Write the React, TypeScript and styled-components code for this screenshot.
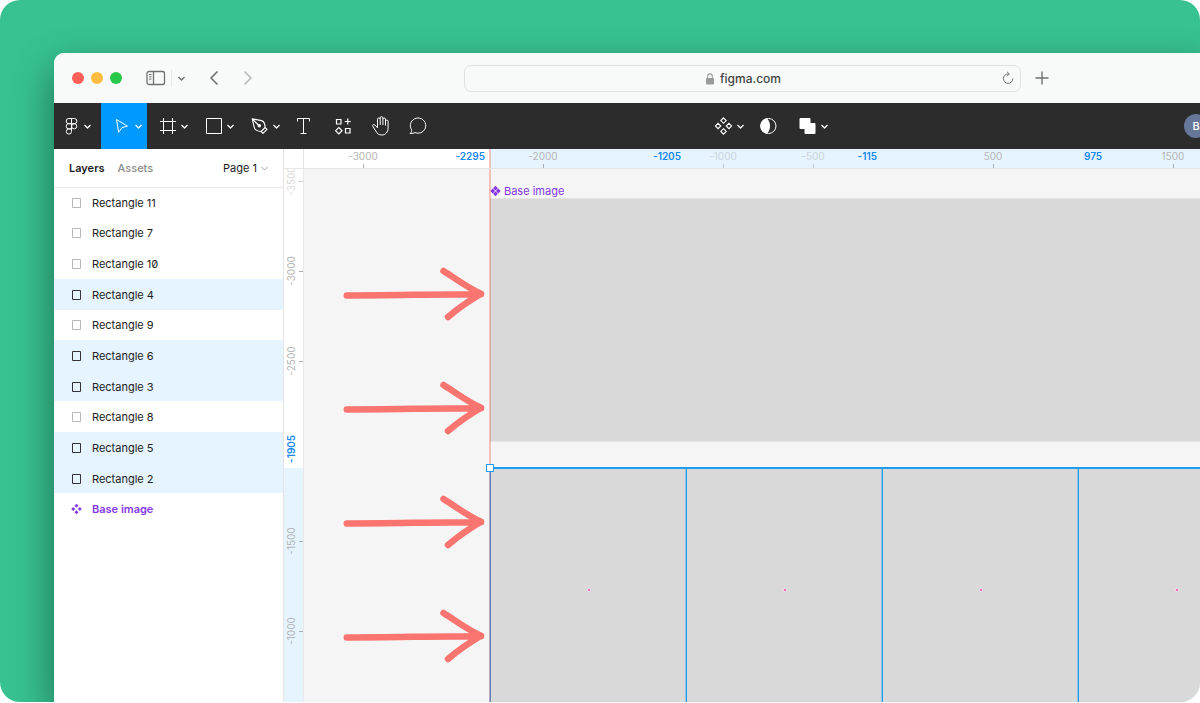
import React from "react";
import styled, { createGlobalStyle, css } from "styled-components";

const GlobalStyle = createGlobalStyle`
  *, *::before, *::after { box-sizing: border-box; }
  body { margin: 0; background: #fff; }
  body, button, input { font-family: Inter, "Liberation Sans", sans-serif; }
  button { margin: 0; padding: 0; border: 0; background: none; color: inherit; }
  svg { display: block; flex: none; }
`;

/* ---------- frame ---------- */

const Stage = styled.main`
  display: flex;
  min-height: calc(100vh - 1px);
  padding: 53px 0 0 54px;
  overflow: hidden;
  border-radius: 20px;
  background: #38c291;
`;

const BrowserWindow = styled.section`
  flex: 1;
  min-width: 0;
  display: flex;
  flex-direction: column;
  margin-right: -8px;
  border-radius: 10px 10px 0 0;
  background: #fff;
  box-shadow: 0 16px 42px rgba(0, 0, 0, 0.45);
`;

const TitleBar = styled.header`
  display: flex;
  align-items: center;
  height: 50px;
  padding: 0 155px 0 18px;
  border-radius: 10px 10px 0 0;
  background: #f8faf9;
  color: #6f7170;
`;

const Lights = styled.div`
  display: flex;
  gap: 7px;
`;

const Light = styled.span<{ $color: string }>`
  width: 12px;
  height: 12px;
  border-radius: 50%;
  background: ${(p) => p.$color};
`;

const NavGroup = styled.div`
  display: flex;
  align-items: center;
  margin-left: 24px;
`;

const NavButton = styled.button<{ $width: number; $dim?: boolean }>`
  display: flex;
  align-items: center;
  justify-content: center;
  width: ${(p) => p.$width}px;
  height: 24px;
  color: ${(p) => (p.$dim ? "#b9bbba" : "#6f7170")};
`;

const NavDivider = styled.span`
  width: 1px;
  height: 17px;
  margin-left: 5px;
  background: #e6e8e7;
`;

const AddressBar = styled.form`
  flex: 1;
  display: flex;
  align-items: center;
  height: 27px;
  margin: 0 10px 0 205px;
  padding: 0 6px;
  border: 1px solid #e0e2e1;
  border-radius: 7px;
`;

const AddressField = styled.label`
  flex: 1;
  display: flex;
  align-items: center;
  justify-content: center;
  gap: 6px;
  padding: 1px 0 0 17px;
`;

const AddressInput = styled.input`
  width: 64px;
  padding: 0;
  border: 0;
  outline: 0;
  background: none;
  color: #434544;
  font-size: 12px;
  font-weight: 500;
  line-height: 16px;
`;

/* ---------- toolbar ---------- */

const Toolbar = styled.nav`
  display: flex;
  align-items: center;
  height: 46px;
  background: #2c2c2c;
  color: #fff;
`;

const Tool = styled.button<{ $active?: boolean; $menu?: boolean }>`
  display: flex;
  align-items: center;
  justify-content: center;
  width: ${(p) => (p.$menu ? 46 : 38)}px;
  height: 46px;
  background: ${(p) => (p.$active ? "#0099ff" : "transparent")};
  ${(p) =>
    p.$menu &&
    css`
      padding-left: 4px;
    `}
`;

const MainMenu = styled(Tool)`
  width: 47px;
  padding: 0 4px 0 0;
`;

const Spacer = styled.div<{ $grow: number }>`
  flex: ${(p) => p.$grow} 1 0;
`;

const Avatar = styled.button`
  width: 24px;
  height: 24px;
  border-radius: 50%;
  background: #667799;
  font-size: 11px;
  font-weight: 500;
`;

/* ---------- layers panel ---------- */

const Body = styled.div`
  flex: 1;
  display: flex;
  min-height: 0;
`;

const Panel = styled.aside`
  flex: none;
  width: 230px;
  border-right: 1px solid #e5e5e5;
  background: #fff;
`;

const PanelHeader = styled.div`
  display: flex;
  align-items: center;
  gap: 13px;
  height: 38px;
  padding: 0 14px 0 15px;
`;

const Tab = styled.button<{ $active?: boolean }>`
  color: ${(p) => (p.$active ? "#1b1b1b" : "#8c8c8c")};
  font-size: 11px;
  font-weight: ${(p) => (p.$active ? 600 : 500)};
  line-height: 16px;
`;

const PageButton = styled.button`
  display: flex;
  align-items: center;
  gap: 3px;
  margin-left: auto;
  color: #a3a3a3;
  font-size: 11px;
  line-height: 16px;
  span { color: #1b1b1b; }
`;

const LayerList = styled.ul`
  display: grid;
  grid-template-rows: repeat(11, 1fr);
  height: 337px;
  margin: 0;
  padding: 0;
  list-style: none;
  box-shadow: inset 0 1px 0 #e8e8e8;
`;

const Layer = styled.li<{ $selected?: boolean; $component?: boolean }>`
  display: flex;
  align-items: center;
  gap: 10px;
  padding: 1px 0 0 16px;
  background: ${(p) => (p.$selected ? "#e5f4ff" : "transparent")};
  color: ${(p) => (p.$component ? "#8638e5" : "#222")};
  font-size: 11px;
  font-weight: ${(p) => (p.$component ? 600 : 400)};
  font-feature-settings: "zero";
  line-height: 16px;
  svg { color: ${(p) => (p.$component ? "#8638e5" : p.$selected ? "#333" : "#b8b8b8")}; }
`;

/* ---------- rulers and canvas ---------- */

const Workspace = styled.div`
  flex: 1;
  min-width: 0;
  display: grid;
  grid-template: 20px 1fr / 20px 1fr;
`;

const Corner = styled.div`
  border-right: 1px solid #e5e5e5;
  border-bottom: 1px solid #e5e5e5;
`;

const rulerText = css`
  color: #b5b5b5;
  font-size: 10px;
  line-height: 12px;
`;

const TopRuler = styled.div`
  position: relative;
  overflow: hidden;
  border-bottom: 1px solid #e5e5e5;
  ${rulerText}
`;

const SideRuler = styled.div`
  position: relative;
  overflow: hidden;
  border-right: 1px solid #e8e8e8;
  ${rulerText}
`;

const TopRange = styled.div`
  position: absolute;
  inset: 0 0 0 186px;
  background: #e5f4ff;
`;

const SideRange = styled.div`
  position: absolute;
  inset: 299px 0 0 0;
  background: #e5f4ff;
`;

type MarkKind = "plain" | "faded" | "before" | "after";

const markColor = css<{ $kind: MarkKind }>`
  opacity: ${(p) => (p.$kind === "faded" ? 0.5 : 1)};
  ${(p) =>
    (p.$kind === "before" || p.$kind === "after") &&
    css`
      color: #1489f0;
      font-weight: 600;
    `}
`;

const TopMark = styled.span<{ $kind: MarkKind }>`
  position: absolute;
  top: 1px;
  transform: translateX(
    ${(p) => (p.$kind === "before" ? "calc(-100% - 5px)" : p.$kind === "after" ? "6px" : "-50%")}
  );
  ${markColor}
`;

const SideMark = styled.span<{ $kind: MarkKind }>`
  position: absolute;
  left: 1px;
  writing-mode: vertical-rl;
  transform: translateY(${(p) => (p.$kind === "before" ? "calc(-100% - 5px)" : "-50%")}) rotate(180deg);
  ${markColor}
`;

const TopTick = styled.i<{ $kind: MarkKind }>`
  position: absolute;
  bottom: 0;
  width: 1px;
  height: 4px;
  background: #a8aeb3;
  opacity: ${(p) => (p.$kind === "faded" ? 0.6 : 1)};
`;

const SideTick = styled.i<{ $kind: MarkKind }>`
  position: absolute;
  right: 0;
  width: 4px;
  height: 1px;
  background: #a8aeb3;
  opacity: ${(p) => (p.$kind === "faded" ? 0.6 : 1)};
`;

const Canvas = styled.div`
  position: relative;
  overflow: hidden;
  background: #f5f5f5;
`;

const FrameLabel = styled.div`
  position: absolute;
  top: 14px;
  left: 186px;
  display: flex;
  align-items: center;
  gap: 3px;
  color: #8638e5;
  font-size: 11px;
  line-height: 16px;
`;

const BaseImage = styled.div`
  position: absolute;
  top: 29px;
  left: 186px;
  right: 0;
  height: 244px;
  border: solid #e4e4e4;
  border-width: 1px 0;
  background: #d9d9d9;
`;

const Slice = styled.div`
  position: absolute;
  top: 298px;
  bottom: 0;
  width: 196px;
  display: flex;
  justify-content: center;
  padding-top: 119px;
  border: solid #1c9cf2;
  border-width: 2px 0 0 1px;
  background: #d9d9d9;
  box-shadow: -1px 0 0 rgba(28, 156, 242, 0.4);
`;

const CenterDot = styled.span`
  width: 4px;
  height: 4px;
  border: 1px solid #f6e6ef;
  border-radius: 50%;
  background: #f0409c;
`;

const SnapLine = styled.div`
  position: absolute;
  top: 0;
  bottom: 0;
  left: 185px;
  width: 2px;
  background: rgba(242, 72, 50, 0.3);
`;

const Handle = styled.span`
  position: absolute;
  top: 295px;
  left: 182px;
  width: 8px;
  height: 8px;
  border: 1px solid #1c9cf2;
  background: #fff;
`;

const Arrow = styled.svg`
  position: absolute;
  left: 36px;
`;

/* ---------- icons ---------- */

type StrokeProps = { w: number; h: number; sw?: number; children: React.ReactNode };

const Ico = ({ w, h, sw = 1, children }: StrokeProps) => (
  <svg
    width={w}
    height={h}
    viewBox={`0 0 ${w} ${h}`}
    fill="none"
    stroke="currentColor"
    strokeWidth={sw}
    strokeLinejoin="round"
    aria-hidden="true"
  >
    {children}
  </svg>
);

const Chevron = ({ sw = 1 }: { sw?: number }) => (
  <Ico w={9} h={24} sw={sw}>
    <path d="M1.500 11 4.500 14 7.500 11" />
  </Ico>
);

const FigmaIcon = () => (
  <Ico w={24} h={24}>
    <path d="M12.500 4.500H9.800a2.600 2.600 0 0 0 0 5.200h2.700zM12.500 4.500h2.800a2.600 2.600 0 0 1 0 5.200h-2.800zM12.500 9.700H9.800a2.600 2.600 0 0 0 0 5.200h2.700zM12.500 14.900H9.800a2.600 2.600 0 1 0 2.700 2.600z" />
    <circle cx="15.200" cy="12.300" r="2.600" />
  </Ico>
);

const MoveIcon = () => (
  <Ico w={24} h={24}>
    <path d="M6.500 5.500 17.500 12.200 12 13.600 8.600 18.300z" strokeLinejoin="miter" />
  </Ico>
);

const FrameIcon = () => (
  <Ico w={24} h={24}>
    <path d="M7.500 4v16M16.500 4v16M4 7.500h16M4 16.500h16" />
  </Ico>
);

const RectIcon = () => (
  <Ico w={24} h={24}>
    <rect x="4.500" y="4.500" width="15" height="15" />
  </Ico>
);

const PenIcon = () => (
  <Ico w={24} h={24} sw={1.1}>
    <path d="M4.200 4.800 13.500 6.600c2.300.6 3.500 3.200 3.600 6.900l-4 4C9.400 17.300 7 16.100 6.400 13.800zM4.400 5l6 6" />
    <circle cx="11.300" cy="11.800" r="1.200" fill="currentColor" />
    <path d="m17.100 13.500 1.900 1.900-4 4-1.900-1.900" />
  </Ico>
);

const TextIcon = () => (
  <Ico w={24} h={24}>
    <path d="M5.500 7.500v-3h12v3M11.500 4.500v15M8.500 19.500h6" strokeLinejoin="miter" />
  </Ico>
);

const ResourcesIcon = () => (
  <Ico w={24} h={24} sw={1.2}>
    <path d="M6.500 5.500h4.500v4.500h-4.500zM15.500 14.500h4.500v4.500h-4.500zM8.800 13.500l3.200 3.200-3.200 3.200-3.200-3.200zM17.800 4.500v6M14.800 7.500h6" strokeLinejoin="miter" />
  </Ico>
);

const HandIcon = () => (
  <Ico w={24} h={24}>
    <path d="M9.500 12V5.200c0-1.700 2.700-1.700 2.700 0V11M12.200 5V3.900c0-1.700 2.700-1.700 2.700 0V11M14.900 5.200c0-1.600 2.600-1.600 2.600 0V11.500M17.500 7.200c0-1.500 2.600-1.500 2.600 0V14c0 4-2.500 7-6.300 7-3 0-4.600-1.400-6-4l-3-4.600c-.8-1.600 1.200-2.500 2.200-1.300l2.500 2.700V6.500" />
  </Ico>
);

const CommentIcon = () => (
  <Ico w={24} h={24}>
    <path d="M4 19.500c1.400-1.200 2-2.400 1.500-3.900a7.700 7.600 0 1 1 3.600 3c-1.300.7-3 .9-5.100.9z" />
  </Ico>
);

const ComponentsIcon = () => (
  <Ico w={24} h={24} sw={1.1}>
    <path d="M11.500 3.900 14.200 6.600 11.500 9.300 8.800 6.600zM11.500 14.700l2.700 2.700-2.700 2.700-2.700-2.700zM6.100 9.300l2.700 2.700-2.700 2.700L3.400 12zM16.900 9.300l2.700 2.700-2.700 2.700-2.700-2.700z" strokeLinejoin="miter" />
  </Ico>
);

const MaskIcon = () => (
  <Ico w={24} h={24}>
    <circle cx="12.500" cy="12" r="7.500" />
    <path d="M10.500 4.700C14.500 7.500 14.500 16.500 10.500 19.300A7.500 7.500 0 0 1 10.500 4.700z" fill="currentColor" />
  </Ico>
);

const UnionIcon = () => (
  <Ico w={24} h={24}>
    <path d="M4 4.500h10v5h5v10H9v-5H4z" fill="currentColor" strokeLinejoin="miter" />
  </Ico>
);

const SidebarIcon = () => (
  <Ico w={20} h={16} sw={1.3}>
    <rect x="1" y="1.500" width="17.500" height="13" rx="2" />
    <path d="M7.500 1.500v13" />
    <path d="M3 4.500h2.500M3 6.800h2.500M3 9.100h2.500" strokeWidth="1" />
  </Ico>
);

const LockIcon = () => (
  <svg width="8" height="12" viewBox="0 0 8 12" aria-hidden="true">
    <rect y="5" width="8" height="6.500" rx="1" fill="#999b9a" />
    <path d="M1.700 5V3.200a2.300 2.300 0 0 1 4.600 0V5" fill="none" stroke="#999b9a" strokeWidth="1.100" />
  </svg>
);

const LayerRect = () => (
  <Ico w={12} h={12}>
    <rect x="2.500" y="1.500" width="8" height="9" />
  </Ico>
);

const Diamonds = () => (
  <svg width="12" height="12" viewBox="0 0 12 12" fill="currentColor" aria-hidden="true">
    <path d="M6.500.7l2 2-2 2-2-2zM6.500 7.300l2 2-2 2-2-2zM3.200 4l2 2-2 2-2-2zM9.800 4l2 2-2 2-2-2z" />
  </svg>
);

const LabelDiamonds = () => (
  <svg width="11" height="12" viewBox="0 0 11 12" fill="currentColor" aria-hidden="true">
    <path d="M5.500.8 7.900 3.200 5.500 5.600 3.100 3.200zM5.500 6.400l2.400 2.400-2.400 2.400-2.400-2.400zM2.700 3.600l2.400 2.400-2.400 2.400L.3 6zM8.300 3.600 10.700 6 8.300 8.400 5.900 6z" />
  </svg>
);

/* ---------- data ---------- */

const SCALE = 0.18;
const toX = (value: number) => Math.floor(59.2 + (value + 3000) * SCALE);
const toY = (value: number) => Math.round(102 + (value + 3000) * SCALE);

const topMarks: [number, MarkKind][] = [
  [-3000, "plain"],
  [-2295, "before"],
  [-2000, "plain"],
  [-1205, "before"],
  [-1000, "faded"],
  [-500, "faded"],
  [-115, "before"],
  [500, "plain"],
  [975, "after"],
  [1500, "plain"],
];

const sideMarks: [number, MarkKind][] = [
  [-3500, "faded"],
  [-3000, "plain"],
  [-2500, "plain"],
  [-1905, "before"],
  [-1500, "plain"],
  [-1000, "plain"],
];

const hasTick = (kind: MarkKind) => kind === "plain" || kind === "faded";

const layers: [string, boolean][] = [
  ["Rectangle 11", false],
  ["Rectangle 7", false],
  ["Rectangle 10", false],
  ["Rectangle 4", true],
  ["Rectangle 9", false],
  ["Rectangle 6", true],
  ["Rectangle 3", true],
  ["Rectangle 8", false],
  ["Rectangle 5", true],
  ["Rectangle 2", true],
];

const slices = [-2295, -1205, -115, 975];
const arrowTops = [96, 210, 324, 438];

const menuTools = [
  { name: "Move", icon: <MoveIcon />, active: true },
  { name: "Frame", icon: <FrameIcon /> },
  { name: "Rectangle", icon: <RectIcon /> },
  { name: "Pen", icon: <PenIcon /> },
];

const plainTools = [
  { name: "Text", icon: <TextIcon /> },
  { name: "Resources", icon: <ResourcesIcon /> },
  { name: "Hand", icon: <HandIcon /> },
  { name: "Comment", icon: <CommentIcon /> },
];

export default function App() {
  return (
    <>
      <GlobalStyle />
      <Stage>
        <BrowserWindow>
          <TitleBar>
            <Lights>
              <Light $color="#ff5f57" />
              <Light $color="#febc40" />
              <Light $color="#28c84a" />
            </Lights>
            <NavGroup>
              <NavButton $width={20} aria-label="Sidebar"><SidebarIcon /></NavButton>
              <NavDivider />
              <NavButton $width={19} aria-label="Sidebar menu"><Chevron sw={1.5} /></NavButton>
              <NavButton $width={46} aria-label="Back">
                <Ico w={10} h={16} sw={1.6}><path d="M8.500 1.500 2 8l6.500 6.500" /></Ico>
              </NavButton>
              <NavButton $width={22} $dim aria-label="Forward">
                <Ico w={10} h={16} sw={1.6}><path d="M1.500 1.500 8 8l-6.500 6.500" /></Ico>
              </NavButton>
            </NavGroup>
            <AddressBar>
              <AddressField>
                <LockIcon />
                <AddressInput aria-label="Address" defaultValue="figma.com" />
              </AddressField>
              <NavButton $width={12} type="button" aria-label="Reload">
                <Ico w={12} h={14}>
                  <path d="M6.500 3a4.700 4.700 0 1 0 4.300 4.500M5 .8 7.300 3 5 5.300" />
                </Ico>
              </NavButton>
            </AddressBar>
            <NavButton $width={22} aria-label="New tab">
              <Ico w={14} h={14} sw={1.4}><path d="M7 .5v13M.5 7h13" /></Ico>
            </NavButton>
          </TitleBar>

          <Toolbar>
            <MainMenu aria-label="Main menu"><FigmaIcon /><Chevron sw={1.2} /></MainMenu>
            {menuTools.map((t) => (
              <Tool key={t.name} $menu $active={t.active} aria-label={t.name}>
                {t.icon}
                <Chevron sw={1.2} />
              </Tool>
            ))}
            {plainTools.map((t) => (
              <Tool key={t.name} aria-label={t.name}>{t.icon}</Tool>
            ))}
            <Spacer $grow={19} />
            <Tool $menu aria-label="Components"><ComponentsIcon /><Chevron sw={1.2} /></Tool>
            <Tool aria-label="Mask"><MaskIcon /></Tool>
            <Tool $menu aria-label="Union"><UnionIcon /><Chevron sw={1.2} /></Tool>
            <Spacer $grow={25} />
            <Avatar>B</Avatar>
          </Toolbar>

          <Body>
            <Panel>
              <PanelHeader>
                <Tab $active>Layers</Tab>
                <Tab>Assets</Tab>
                <PageButton><span>Page 1</span><Chevron /></PageButton>
              </PanelHeader>
              <LayerList>
                {layers.map(([name, selected]) => (
                  <Layer key={name} $selected={selected}><LayerRect />{name}</Layer>
                ))}
                <Layer $component><Diamonds />Base image</Layer>
              </LayerList>
            </Panel>

            <Workspace>
              <Corner />
              <TopRuler>
                <TopRange />
                <SnapLine />
                {topMarks.map(([value, kind]) => (
                  <React.Fragment key={value}>
                    <TopMark $kind={kind} style={{ left: toX(value) }}>{value}</TopMark>
                    {hasTick(kind) && <TopTick $kind={kind} style={{ left: toX(value) }} />}
                  </React.Fragment>
                ))}
              </TopRuler>
              <SideRuler>
                <SideRange />
                {sideMarks.map(([value, kind]) => (
                  <React.Fragment key={value}>
                    <SideMark $kind={kind} style={{ top: toY(value) }}>{value}</SideMark>
                    {hasTick(kind) && <SideTick $kind={kind} style={{ top: toY(value) }} />}
                  </React.Fragment>
                ))}
              </SideRuler>
              <Canvas>
                <FrameLabel><LabelDiamonds />Base image</FrameLabel>
                <BaseImage />
                {slices.map((value) => (
                  <Slice key={value} style={{ left: toX(value) }}><CenterDot /></Slice>
                ))}
                <SnapLine />
                <Handle />
                {arrowTops.map((top) => (
                  <Arrow
                    key={top}
                    width="150"
                    height="60"
                    viewBox="0 0 150 60"
                    fill="none"
                    stroke="#fa7470"
                    strokeWidth="6.5"
                    strokeLinecap="round"
                    strokeLinejoin="round"
                    style={{ top }}
                    aria-hidden="true"
                  >
                    <path d="M6.800 30.500C50 30.500 95 29.200 141 29.200M103.500 6C117 14.500 128 23 141 28.800 128 36.500 118 43.500 108 52" />
                  </Arrow>
                ))}
              </Canvas>
            </Workspace>
          </Body>
        </BrowserWindow>
      </Stage>
    </>
  );
}
